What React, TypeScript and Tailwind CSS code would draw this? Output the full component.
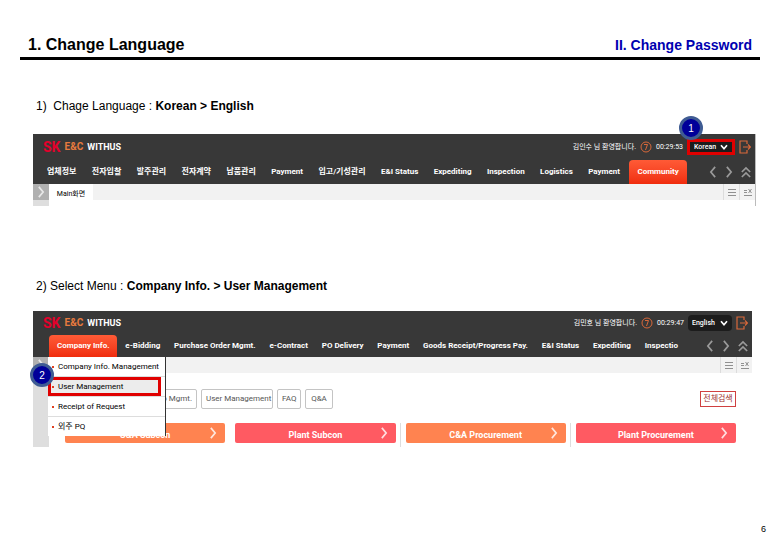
import { ReactNode } from 'react';
import clsx from 'clsx';

const NAV_KO = [
  '업체정보',
  '전자입찰',
  '발주관리',
  '전자계약',
  '납품관리',
  'Payment',
  '입고/기성관리',
  'E&I Status',
  'Expediting',
  'Inspection',
  'Logistics',
  'Payment',
  'Community',
];

const NAV_EN = [
  'Company Info.',
  'e-Bidding',
  'Purchase Order Mgmt.',
  'e-Contract',
  'PO Delivery',
  'Payment',
  'Goods Receipt/Progress Pay.',
  'E&I Status',
  'Expediting',
  'Inspectio',
];

const SUB_MENU = ['Company Info. Management', 'User Management', 'Receipt of Request', '외주 PQ'];

const BANNERS = [
  { label: 'C&A Subcon', color: 'bg-[#ff8350]', divider: false },
  { label: 'Plant Subcon', color: 'bg-[#ff5a62]', divider: false },
  { label: 'C&A Procurement', color: 'bg-[#ff8350]', divider: true },
  { label: 'Plant Procurement', color: 'bg-[#ff5a62]', divider: true },
];

const appFont = 'font-[Roboto,Noto_Sans_CJK_KR,sans-serif]';

function Chevron({ className, d = 'M2 1l5 6-5 6' }: { className?: string; d?: string }) {
  return (
    <svg viewBox="0 0 9 14" className={className} fill="none" stroke="currentColor" strokeWidth="2">
      <path d={d} />
    </svg>
  );
}

function Step({ n, className }: { n: number; className: string }) {
  return (
    <span
      className={clsx(
        'absolute z-20 flex size-6 items-center justify-center rounded-full border-3 border-[#3f5c93] bg-[#000099] font-[Liberation_Sans] text-[10px] text-white',
        className
      )}
    >
      {n}
    </span>
  );
}

interface AppHeaderProps {
  user: string;
  time: string;
  language: string;
  items: string[];
  active: string;
  marked?: boolean;
}

function AppHeader({ user, time, language, items, active, marked }: AppHeaderProps) {
  return (
    <header className="bg-[#383838] text-white">
      <div className={clsx('flex items-center justify-between pr-1 pl-2.5', marked ? 'h-6.5' : 'h-6')}>
        <div className="flex items-center gap-1 leading-none">
          <span className="text-[14px] font-bold text-[#e4002b]">SK</span>
          <span className="text-[10px] font-bold text-[#e87a3e]">E&amp;C</span>
          <span className="text-[9px] font-bold">WITHUS</span>
        </div>
        <div className="flex items-center text-[8px]">
          <span className="text-[7px]">{user}</span>
          <svg viewBox="0 0 12 12" className="mx-1 size-3" fill="none" stroke="#d9683a">
            <circle cx="6" cy="6" r="5" />
            <path d="M4 3.500h3.500L5.500 9" />
          </svg>
          <span className="text-[7px]">{time}</span>
          <label
            className={clsx(
              'relative mx-1 flex h-4 items-center bg-[#1c1c1c]',
              marked ? 'w-12 border-3 border-[#e00000]' : 'w-11 rounded-sm'
            )}
          >
            <select
              aria-label="Language"
              defaultValue={language}
              className="w-full appearance-none bg-transparent pl-1 text-[7px] font-medium"
            >
              <option>{language}</option>
            </select>
            <Chevron d="M1 5l3.500 4L8 5" className="absolute right-1 h-3 w-2" />
          </label>
          <button aria-label="Log out">
            <svg viewBox="0 0 12 14" className="h-4 w-3" fill="none" stroke="#d9683a" strokeWidth="1.2">
              <path d="M8 4V1H1v12h7v-3M4 7h7M9 4.500l2.500 2.500L9 9.500" />
            </svg>
          </button>
        </div>
      </div>
      <div className={clsx('flex items-stretch', marked ? 'h-6 pl-2' : 'h-5.5 pl-4')}>
        <nav className="flex min-w-0 flex-1 justify-between">
          {items.map((item, i) => (
            <a
              key={i}
              href="#"
              className={clsx(
                'flex items-center rounded-t-sm text-[8px] font-bold whitespace-nowrap',
                item === active ? 'bg-linear-to-b from-[#ff5a36] to-[#f02c0c] px-2' : 'px-1.5'
              )}
            >
              {item}
            </a>
          ))}
        </nav>
        <div className="flex w-17 shrink-0 items-center justify-end gap-2 pr-1 text-[#9a9a9a]">
          <button aria-label="Previous menus">
            <Chevron d="M7 1L2 7l5 6" className="h-3 w-2" />
          </button>
          <button aria-label="Next menus">
            <Chevron className="h-3 w-2" />
          </button>
          <button aria-label="Collapse">
            <svg viewBox="0 0 12 14" className="h-3 w-2.5" fill="none" stroke="currentColor" strokeWidth="2">
              <path d="M1 7l5-5 5 5M1 13l5-5 5 5" />
            </svg>
          </button>
        </div>
      </div>
    </header>
  );
}

function TabBar({ children }: { children?: ReactNode }) {
  return (
    <div className="flex h-4 bg-[#f2f2f2]">
      <button aria-label="Expand side menu" className="flex w-4 items-center justify-center bg-[#b0b0b0] text-[#e8e8e8]">
        <Chevron className="h-3 w-2" />
      </button>
      {children}
      <div className="ml-auto flex text-[#909090]">
        <button aria-label="Tab list" className="flex w-4 items-center justify-center border-l border-[#dcdcdc]">
          <svg viewBox="0 0 8 8" className="size-2" stroke="currentColor">
            <path d="M0 1.500h8M0 4.500h8M0 7.500h8" />
          </svg>
        </button>
        <button aria-label="Close tabs" className="flex w-4 items-center justify-center border-l border-[#dcdcdc]">
          <svg viewBox="0 0 8 8" className="size-2" stroke="currentColor">
            <path d="M0 2.500h3M0 4.500h3M0 7.500h8M4.500 1l3 4M7.500 1l-3 4" />
          </svg>
        </button>
      </div>
    </div>
  );
}

const chip = 'h-5 rounded-xs border border-[#c4c4c4] px-1 text-[8px] whitespace-nowrap text-[#555]';

export default function App() {
  return (
    <main className="bg-white font-[Liberation_Sans,Noto_Sans_CJK_KR,sans-serif] text-black">
      <header className="mx-5 flex h-15 items-end justify-between border-b-3 border-black px-2 pb-1">
        <h1 className="text-[16px] leading-4 font-bold">1. Change Language</h1>
        <p className="text-[14px] leading-4 font-bold text-[#0000b0]">II. Change Password</p>
      </header>

      <h2 className="mt-9 ml-9 text-[12px] leading-5">
        1)&nbsp; Chage Language : <b>Korean &gt; English</b>
      </h2>
      <section className={clsx('relative mt-4.5 mr-6 ml-8 border-r border-[#bbb] pl-px', appFont)}>
        <Step n={1} className="-top-4.5 right-13" />
        <AppHeader
          user="김인수 님 환영합니다."
          time="00:29:53"
          language="Korean"
          items={NAV_KO}
          active="Community"
          marked
        />
        <TabBar>
          <span className="w-11 bg-white text-center text-[7px] leading-5">Main화면</span>
        </TabBar>
        <div className="h-1.5 w-4 bg-[#dedede]" />
      </section>

      <h2 className="mt-17.5 ml-9 text-[12px] leading-5">
        2) Select Menu : <b>Company Info. &gt; User Management</b>
      </h2>
      <section className={clsx('relative mt-[15px] mr-7 ml-8 pl-px', appFont)}>
        <AppHeader
          user="김민호 님 환영합니다."
          time="00:29:47"
          language="English"
          items={NAV_EN}
          active="Company Info."
        />
        <TabBar />
        <div className="flex">
          <div className="w-4 bg-[#dedede]" />
          <div className="flex-1 pt-4 pr-4 pb-1 pl-4">
            <div className="flex items-center gap-1 pl-17">
              <button className={clsx(chip, 'w-16 text-right')}>Info Mgmt.</button>
              <button className={clsx(chip, 'w-18')}>User Management</button>
              <button className={clsx(chip, 'w-6')}>FAQ</button>
              <button className={clsx(chip, 'w-7')}>Q&amp;A</button>
              <button className="ml-auto h-4 w-9 border border-[#d04040] text-[8px] leading-none text-[#a03030]">
                전체검색
              </button>
            </div>
            <div className="mt-3.5 grid grid-cols-4 gap-2.5">
              {BANNERS.map((b) => (
                <button
                  key={b.label}
                  className={clsx(
                    'relative h-5 rounded-xs pt-1 text-[9px] leading-4 font-bold text-white',
                    b.color,
                    b.divider && 'before:absolute before:top-0 before:-left-1.5 before:h-6 before:w-px before:bg-[#ddd]'
                  )}
                >
                  {b.label}
                  <Chevron className="absolute top-1 right-2 h-3 w-2 opacity-80" />
                </button>
              ))}
            </div>
          </div>
        </div>

        {/* dropdown of the first menu */}
        <ul className="absolute top-11.5 left-4 z-10 w-[118px] border-r border-[#333] bg-white text-[8px]">
          {SUB_MENU.map((item) => (
            <li key={item} className="border-b border-[#ddd] last:border-0">
              <a
                href="#"
                className={clsx(
                  'flex h-[19px] items-center whitespace-nowrap',
                  item === 'User Management' ? 'mr-1 border-3 border-[#e00000] bg-[#ececec] px-px' : 'px-1'
                )}
              >
                <span className="mr-1 size-0.5 shrink-0 bg-[#e04020]" />
                {item}
              </a>
            </li>
          ))}
        </ul>
        <Step n={2} className="top-13 -left-0.5" />
      </section>

      <footer className="mt-18 pr-3.5 text-right text-[9px] leading-5">6</footer>
    </main>
  );
}
